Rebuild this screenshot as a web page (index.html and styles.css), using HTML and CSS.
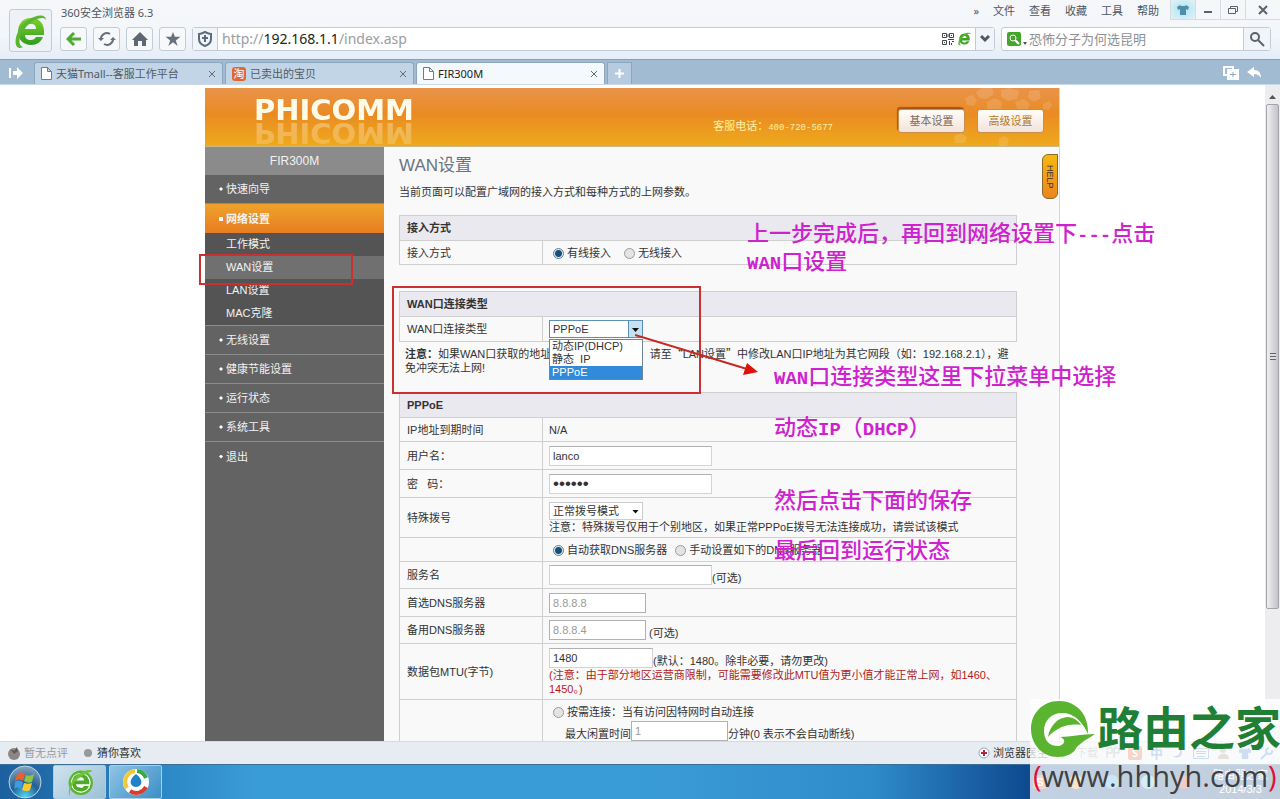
FILE: index.html
```html
<!DOCTYPE html>
<html lang="zh-CN">
<head>
  <meta charset="UTF-8" />
  <meta name="viewport" content="width=device-width, initial-scale=1.0" />
  <title>FIR300M</title>
  <link rel="stylesheet" href="styles.css">
</head>
<body>
  <header class="chrome">
    <button class="logo-btn" aria-label="360">
      <svg width="36" height="38" viewBox="0 0 36 38">
        <defs><linearGradient id="g1" x1="0" y1="0" x2="0" y2="1"><stop offset="0" stop-color="#7fd02e"/><stop offset="1" stop-color="#2f9c1e"/></linearGradient></defs>
        <path d="M18 6C9 6 5 13 5 20c0 8 6 13 13 13 6 0 10-3 12-8h-7c-1 2-3 3-5 3-4 0-6-2-6-5h19C32 12 27 6 18 6zM12 17c1-4 3-5 6-5s5 1 5 5z" fill="url(#g1)"/>
        <path d="M33 8C33 2 24 2 15 8 6 14 1 26 3 33c1 3 4 4 7 2-5-1-5-11 2-19C19 8 30 3 33 8z" fill="#5cb531"/>
      </svg>
    </button>
    <div class="chrome-main">
      <div class="title-row">
        <span class="app-title">360安全浏览器 6.3</span>
        <nav class="menu">
          <a href="#">»</a><a href="#">文件</a><a href="#">查看</a><a href="#">收藏</a><a href="#">工具</a><a href="#">帮助</a>
        </nav>
        <div class="win-btns">
          <button class="skin" aria-label="皮肤"><svg width="12" height="12" viewBox="0 0 12 12"><path d="M3 1l1 1h4l1-1 3 2-1 3-2-1v6H3V5L1 6 0 3z" fill="#4f8ea8"/></svg></button>
          <button aria-label="最小化"><svg width="10" height="10"><path d="M1 7h8" stroke="#59636e" stroke-width="2"/></svg></button>
          <button aria-label="还原"><svg width="12" height="10" fill="none" stroke="#59636e"><path d="M3.500 3V1.500h7v5H9M1.500 3.500h7v5h-7z"/></svg></button>
          <button class="close" aria-label="关闭"><svg width="10" height="10"><path d="M1 1l8 8M9 1L1 9" stroke="#59636e" stroke-width="2"/></svg></button>
        </div>
      </div>
      <div class="tool-row">
        <button class="tool" aria-label="后退"><svg width="16" height="14"><path d="M8 1L2 7l6 6M3 7h12" fill="none" stroke="#4dab31" stroke-width="3"/></svg></button>
        <button class="tool" aria-label="刷新"><svg width="18" height="16" fill="none" stroke="#66717c" stroke-width="2"><path d="M3 9a6 6 0 0 1 9-6M15 7a6 6 0 0 1-9 6"/><path d="M0 7l3 3 3-3zM12 9l3-3 3 3z" fill="#66717c" stroke="none"/></svg></button>
        <button class="tool" aria-label="主页"><svg width="16" height="14"><path d="M8 0l8 8h-2v6h-4V9H6v5H2V8H0z" fill="#5d6872"/></svg></button>
        <button class="tool" aria-label="收藏夹"><svg width="16" height="14" viewBox="0 0 16 15"><path d="M8 0l2 5h6l-5 4 2 6-5-4-5 4 2-6-5-4h6z" fill="#66717c"/></svg></button>
        <div class="address">
          <span class="shield"><svg width="16" height="16" fill="none" stroke="#5a6b7e" stroke-width="2"><path d="M8 1c2 1 4 2 6 2v5c0 4-3 6-6 7-3-1-6-3-6-7V3c2 0 4-1 6-2zM8 4v7M5 7h6"/></svg></span>
          <span class="url">http://<b>192.168.1.1</b>/index.asp</span>
          <svg width="12" height="12" fill="none" stroke="#3f454b"><path d="M.5.500h4v4h-4zM7.500.500h4v4h-4zM.5 7.500h4v4h-4zM2 2.500h1M9 2.500h1M2 9.500h1M6 1v3M6 6.500h6M7.500 8v4M10 8.500h2M9.500 10v2"/></svg>
          <svg width="13" height="14" viewBox="2 3 32 33"><path d="M18 6C9 6 5 13 5 20c0 8 6 13 13 13 6 0 10-3 12-8h-7c-1 2-3 3-5 3-4 0-6-2-6-5h19C32 12 27 6 18 6zM12 17c1-4 3-5 6-5s5 1 5 5z" fill="#3fa528"/><path d="M33 8C32 3 24 3 15 9 6 15 2 26 3 33c1 2 3 3 6 1-5-2-2-12 4-18 7-7 16-12 20-8z" fill="#5cb531"/></svg>
          <button class="drop" aria-label="展开"><svg width="10" height="8"><path d="M1 1l4 4 4-4" fill="none" stroke="#4f5962" stroke-width="3"/></svg></button>
        </div>
        <div class="search">
          <svg class="engine" width="20" height="15"><rect width="14" height="14" rx="2" fill="#43a52a"/><circle cx="6" cy="6" r="3" fill="none" stroke="#fff" stroke-width="1"/><path d="M8 8l4 4" stroke="#fff" stroke-width="2"/><path d="M16 10h4l-2 3z" fill="#555"/></svg>
          <input type="text" aria-label="搜索" placeholder="恐怖分子为何选昆明">
          <button aria-label="搜索"><svg width="16" height="16" fill="none" stroke="#59636e" stroke-width="2"><circle cx="6" cy="6" r="4"/><path d="M9 9l6 6"/></svg></button>
        </div>
      </div>
    </div>
  </header>

  <nav class="tabs">
    <button class="tab-side" aria-label="侧栏"><svg width="14" height="12"><path d="M0 1h2v10H0zM4 4h4V0l6 6-6 6V8H4z" fill="#fff"/></svg></button>
    <div class="tab"><svg width="11" height="13"><path d="M.5.500h6l4 4v8H.5zM6.500.500v4h4" fill="#fff" stroke="#6e7c8a"/></svg><span>天猫Tmall--客服工作平台</span><button aria-label="关闭"><svg width="8" height="8"><path d="M1 1l6 6M7 1L1 7" stroke="#5f6b77" stroke-width="1"/></svg></button></div>
    <div class="tab"><span class="taobao">淘</span><span>已卖出的宝贝</span><button aria-label="关闭"><svg width="8" height="8"><path d="M1 1l6 6M7 1L1 7" stroke="#5f6b77" stroke-width="1"/></svg></button></div>
    <div class="tab active"><svg width="11" height="13"><path d="M.5.500h6l4 4v8H.5zM6.500.500v4h4" fill="#fff" stroke="#6e7c8a"/></svg><span>FIR300M</span><button aria-label="关闭"><svg width="8" height="8"><path d="M1 1l6 6M7 1L1 7" stroke="#5f6b77" stroke-width="1"/></svg></button></div>
    <button class="tab-new" aria-label="新标签"><svg width="9" height="9"><path d="M4.500 0v9M0 4.500h9" stroke="#fff" stroke-width="2"/></svg></button>
    <div class="tab-tools">
      <svg width="16" height="14" fill="none" stroke="#fff" stroke-width="2"><path d="M4 9H1V1h9v2"/><path d="M5 4h10v9H5z" fill="#fff"/><path d="M10 6v5M7 8.500h6" stroke="#8fa9c0" stroke-width="1"/></svg>
      <svg width="15" height="12"><path d="M0 5l7-5v3c5 0 7 3 7 8-2-3-4-4-7-4v3z" fill="#fff"/></svg>
    </div>
  </nav>

  <div class="viewport">
    <div class="scroll-area">
      <div class="router">
        <div class="banner">
          <span class="brand">PHICOMM</span>
          <svg class="pattern" width="110" height="58" fill="#fff" fill-opacity=".13"><path d="M16 10l7-3 5 5-3 6-7-1zM27 4l6-4h10l2 6-7 5-8-1zM38 14l8-4 7 4-1 8-8 3-6-4zM52 2l9-2 9 3-2 8-9 2-7-4zM66 14l9-3 6 5-3 7-9 1zM80 3l10-1 2 8-7 4-6-4zM94 16l6-3 3 4-3 5-6-1zM5 48l7-3 6 4-2 6H6zM50 50l6-2 4 4-2 6h-8z"/></svg>
          <span class="hotline">客服电话：<span>400-720-5677</span></span>
          <button class="mode current">基本设置</button>
          <button class="mode">高级设置</button>
        </div>
        <div class="columns">
          <nav class="side">
            <div class="model">FIR300M</div>
            <a class="item" href="#">快速向导</a>
            <a class="item open" href="#">网络设置</a>
            <div class="sub">
              <a href="#">工作模式</a>
              <a href="#" class="on">WAN设置</a>
              <a href="#">LAN设置</a>
              <a href="#">MAC克隆</a>
            </div>
            <a class="item" href="#">无线设置</a>
            <a class="item" href="#">健康节能设置</a>
            <a class="item" href="#">运行状态</a>
            <a class="item" href="#">系统工具</a>
            <a class="item last" href="#">退出</a>
          </nav>
          <main class="content">
            <h1>WAN设置</h1>
            <p class="desc">当前页面可以配置广域网的接入方式和每种方式的上网参数。</p>
            <button class="help">HELP</button>

            <table class="grid access">
              <colgroup><col class="col-name"><col></colgroup>
              <tr><th colspan="2">接入方式</th></tr>
              <tr class="h24">
                <td class="name">接入方式</td>
                <td><input type="radio" name="access" id="wired" checked><label for="wired">有线接入</label><input type="radio" name="access" id="wifi" class="next"><label for="wifi">无线接入</label></td>
              </tr>
            </table>

            <table class="grid">
              <colgroup><col class="col-name"><col></colgroup>
              <tr><th colspan="2">WAN口连接类型</th></tr>
              <tr class="h25">
                <td class="name"><label for="wanType">WAN口连接类型</label></td>
                <td>
                  <div class="select focus">
                    <select id="wanType"><option>动态IP(DHCP)</option><option>静态 IP</option><option selected>PPPoE</option></select>
                    <ul class="options"><li>动态IP(DHCP)</li><li>静态&nbsp; IP</li><li class="picked">PPPoE</li></ul>
                  </div>
                </td>
              </tr>
            </table>
            <p class="note"><b>注意：</b>如果WAN口获取的地址与LAN口同一网段，请至<q>LAN设置</q>中修改LAN口IP地址为其它网段（如：192.168.2.1），避免冲突无法上网!</p>

            <table class="grid">
              <colgroup><col class="col-name"><col></colgroup>
              <tr><th colspan="2">PPPoE</th></tr>
              <tr class="h24"><td class="name">IP地址到期时间</td><td>N/A</td></tr>
              <tr class="h28"><td class="name"><label for="user">用户名：</label></td><td><input class="text" type="text" id="user" value="lanco"></td></tr>
              <tr class="h28"><td class="name"><label for="pass">密&nbsp;&nbsp; 码：</label></td><td><input class="text" type="password" id="pass" value="123456"></td></tr>
              <tr class="h40">
                <td class="name"><label for="dial">特殊拨号</label></td>
                <td>
                  <div class="select"><select id="dial"><option>正常拨号模式</option></select></div>
                  <div class="hint">注意：特殊拨号仅用于个别地区，如果正常PPPoE拨号无法连接成功，请尝试该模式</div>
                </td>
              </tr>
              <tr class="h24">
                <td class="name"></td>
                <td><input type="radio" name="dns" id="auto" checked><label for="auto">自动获取DNS服务器</label><input type="radio" name="dns" id="manual" class="near"><label for="manual">手动设置如下的DNS服务器</label></td>
              </tr>
              <tr class="h27"><td class="name"><label for="service">服务名</label></td><td><div class="line"><input class="text" type="text" id="service"><span>(可选)</span></div></td></tr>
              <tr class="h28"><td class="name"><label for="dns1">首选DNS服务器</label></td><td><div class="line"><input class="text short" type="text" id="dns1" value="8.8.8.8" disabled></div></td></tr>
              <tr class="h27"><td class="name"><label for="dns2">备用DNS服务器</label></td><td><div class="line spaced"><input class="text short" type="text" id="dns2" value="8.8.8.4" disabled><span>(可选)</span></div></td></tr>
              <tr class="h56">
                <td class="name"><label for="mtu">数据包MTU(字节)</label></td>
                <td>
                  <div class="line"><input class="text mtu" type="text" id="mtu" value="1480"><span>(默认：1480。除非必要，请勿更改)</span></div>
                  <div class="warn">(注意：由于部分地区运营商限制，可能需要修改此MTU值为更小值才能正常上网，如1460、1450。)</div>
                </td>
              </tr>
              <tr class="h90">
                <td class="name"></td>
                <td>
                  <div><input type="radio" name="conn" id="demand"><label for="demand">按需连接：当有访问因特网时自动连接</label></div>
                  <div class="line idle"><label for="idle">最大闲置时间</label><input class="text short" type="text" id="idle" value="1" disabled><span>分钟(0 表示不会自动断线)</span></div>
                </td>
              </tr>
            </table>
          </main>
        </div>

        <!-- tutorial marks laid over the page -->
        <div class="mark box-menu"></div>
        <div class="mark box-type"></div>
        <svg class="mark-arrow" width="124" height="48"><path d="M0 4l112 34" stroke="#c52a22" stroke-width="2"/><path d="M123 41l-15 3 4-12z" fill="#e01008"/></svg>
        <p class="tip tip-1">上一步完成后，再回到网络设置下<i>---</i>点击<br><i>WAN</i>口设置</p>
        <p class="tip tip-2"><i>WAN</i>口连接类型这里下拉菜单中选择</p>
        <p class="tip tip-3">动态<i>IP</i>（<i>DHCP</i>）</p>
        <p class="tip tip-4">然后点击下面的保存</p>
        <p class="tip tip-5">最后回到运行状态</p>
      </div>
    </div>
    <div class="scrollbar">
      <span class="up"></span>
      <span class="thumb"></span>
    </div>
  </div>

  <footer class="status">
    <svg width="14" height="14"><circle cx="7" cy="8" r="6" fill="#8c8784"/><path d="M3 3l4 2 3-4 1 4-4 3z" fill="#5f5a58"/></svg>
    <span class="muted">暂无点评</span>
    <span class="dot"></span>
    <span>猜你喜欢</span>
    <div class="status-right">
      <span class="doctor"><svg width="12" height="12"><circle cx="6" cy="6" r="5" fill="#fff" stroke="#9aa3b5"/><path d="M6 3v6M3 6h6" stroke="#b02c3c" stroke-width="2"/></svg>浏览器医生</span>
      <svg width="12" height="12"><path d="M4 0h4v5h4l-6 6-6-6h4z" fill="#58b030"/></svg>
      <span class="muted">下载</span>
      <svg width="14" height="12"><path d="M1 11V1h5v5H1M8 11V1h5v5H8" fill="none" stroke="#778"/></svg>
      <b class="ime">S</b><b class="zh">中</b>
      <svg width="14" height="14"><path d="M8 1c3 5 0 10-6 9 6 5 13-3 6-9z" fill="#3c7ec8"/></svg>
      <svg width="16" height="12" fill="none" stroke="#3c7ec8"><path d="M.5 1.500h15v10H.5zM3 4.500h10M3 6.500h10M4 9.500h8"/></svg>
      <svg width="13" height="14"><circle cx="6" cy="4" r="3" fill="#987"/><path d="M1 13c0-7 11-7 11 0z" fill="#987"/></svg>
      <svg width="14" height="13" viewBox="0 0 12 12"><path d="M3 1l1 1h4l1-1 3 2-1 3-2-1v6H3V5L1 6 0 3z" fill="#3c7ec8"/></svg>
      <svg width="13" height="13"><path d="M1 12l6-6M12 3a3 3 0 1 1-3-2" stroke="#3c7ec8" stroke-width="2" fill="none"/></svg>
    </div>
  </footer>

  <footer class="taskbar">
    <button class="start" aria-label="开始">
      <svg width="34" height="34" viewBox="0 0 34 34">
        <defs><radialGradient id="orb" cx=".5" cy=".95" r=".9"><stop offset="0" stop-color="#4fd6f5"/><stop offset=".5" stop-color="#1f5f95"/><stop offset="1" stop-color="#7f9fb8"/></radialGradient></defs>
        <circle cx="17" cy="17" r="16" fill="url(#orb)" stroke="#bcd6e6"/>
        <path d="M9 9c3-2 5-2 8 0l-2 7c-3-2-5-2-8 0z" fill="#e9602e"/><path d="M18 10c3 1 5 1 8-1l-2 8c-3 1-5 1-8-1z" fill="#8cc63c"/>
        <path d="M7 17c3-2 5-1 8 0l-2 7c-3-2-5-2-7 0z" fill="#3f9be0"/><path d="M16 18c3 1 5 1 8 0l-2 7c-3 2-5 1-8 0z" fill="#fbc92f"/>
      </svg>
    </button>
    <button class="task on" aria-label="360安全浏览器">
      <svg width="30" height="30" viewBox="0 0 36 38"><circle cx="19" cy="20" r="14" fill="#fff" stroke="#5cb531" stroke-width="3"/><path d="M18 9C11 9 8 15 8 20c0 7 5 11 11 11 5 0 9-3 10-7h-6c-1 2-3 3-5 2-3 0-5-1-5-4h17C30 14 26 9 18 9zM13 17c1-3 3-4 6-4s4 1 4 4z" fill="#4dab2a"/><path d="M34 5C28 1 14 8 8 18 4 25 3 33 5 37c-1-12 8-25 29-32z" fill="#6cc33a"/></svg>
    </button>
    <button class="task" aria-label="浏览器">
      <svg width="28" height="28"><circle cx="14" cy="14" r="13" fill="#fff"/><g fill="none" stroke-width="4"><path d="M15 3a11 11 0 0 1 9 7" stroke="#39a845"/><path d="M24 19a11 11 0 0 1-16 4" stroke="#d93e2c"/><path d="M5 20A11 11 0 0 1 13 3" stroke="#f3c736"/></g><path d="M14 6c5 4 6 7 5 10-2 4-8 4-10 0-1-3 0-6 5-10z" fill="#1f82c8"/></svg>
    </button>
    <div class="tray"><b class="ime">S</b><i class="t1"></i><i class="t2"></i><i class="t3"></i><i class="t4"></i><span>路由器之家<br>2014/3/3</span></div>
  </footer>

  <div class="watermark">
    <div class="wm-top">
      <svg width="66" height="58" viewBox="0 0 66 58"><path d="M58 34c1-20-12-33-29-33C12 1 1 14 1 29s11 28 27 28c8 0 14-3 17-7 3-6 11-10 20-16-14 0-24 3-35 3 8 3 3 9-2 9-9 0-14-6-14-15C14 20 22 13 32 13c12 0 20 8 26 21z" fill="#5ab42f"/><path d="M18 37c2-12 10-19 19-20 7 0 11 4 14 8-12-2-24 2-33 12z" fill="#5ab42f"/></svg>
      <span>路由之家</span>
    </div>
    <div class="wm-url"><em>(</em>www.hhhyh.com<em>)</em></div>
  </div>
</body>
</html>
```
FILE: styles.css
```css
* {
  box-sizing: border-box;
}
body {
  margin: 0;
  height: 100vh;
  display: flex;
  flex-direction: column;
  overflow: hidden;
  position: relative;
  background: #fff;
  color: #333;
  font-family: "Liberation Sans", "Noto Sans CJK SC", sans-serif;
  font-size: 11px;
  line-height: 14px;
}
button, input, select {
  font: inherit;
  color: inherit;
  margin: 0;
}
button {
  padding: 0;
  border: none;
  background: none;
  display: flex;
  align-items: center;
  justify-content: center;
}
a {
  color: inherit;
  text-decoration: none;
}
p, h1, ul {
  margin: 0;
  padding: 0;
}
svg {
  flex: none;
}

/* browser toolbar */
.chrome {
  display: flex;
  flex: none;
  gap: 8px;
  height: 59px;
  padding-left: 9px;
  background: linear-gradient(#f6f7f9, #f3f6fa 60%, #e3eef8);
  font-family: "Noto Sans", "Noto Sans CJK SC", sans-serif;
  color: #4d5660;
}
.logo-btn {
  width: 43px;
  height: 43px;
  margin-top: 9px;
  border: 1px solid #c3cbd4;
  border-radius: 3px;
  background: #eef2f6;
}
.chrome-main {
  flex: 1;
}
.title-row {
  display: flex;
  height: 27px;
}
.app-title {
  padding: 6px 1px;
}
.menu {
  display: flex;
  gap: 14px;
  margin-left: auto;
  padding: 4px 11px;
}
.win-btns {
  display: flex;
  height: 20px;
}
.win-btns button {
  width: 25px;
  border: 1px solid #d5dbe2;
  border-width: 0 0 1px 1px;
}
.win-btns .close {
  width: 35px;
}
.win-btns .skin {
  background: radial-gradient(#a8e6f4, #e6f1f6);
}
.tool-row {
  display: flex;
  gap: 6px;
  height: 24px;
  margin-right: 9px;
}
.tool {
  width: 27px;
  border: 1px solid #c3cbd4;
  border-radius: 3px;
  background: #f6f8fa;
}
.address, .search {
  display: flex;
  align-items: center;
  border: 1px solid #c3cbd4;
  border-radius: 3px;
  background: #fff;
}
.address {
  flex: 1;
  gap: 4px;
}
.shield {
  display: flex;
  align-items: center;
  justify-content: center;
  width: 25px;
  height: 22px;
  background: #f1f4f8;
  border-right: 1px solid #c3cbd4;
}
.url {
  flex: 1;
  font-size: 14px;
  color: #9a9da0;
}
.url b {
  font-weight: normal;
  color: #222;
}
.drop {
  width: 19px;
  height: 22px;
  background: #f1f4f8;
  border-left: 1px solid #c3cbd4;
}
.search {
  width: 270px;
  padding-left: 5px;
  gap: 2px;
}
.search input {
  flex: 1;
  min-width: 0;
  padding: 0;
  border: none;
  outline: none;
  background: none;
  font-size: 13px;
}
.search input::placeholder {
  color: #8e9194;
}
.search button {
  width: 27px;
  height: 22px;
  background: #f1f4f8;
  border-left: 1px solid #c3cbd4;
}

/* tabs */
.tabs {
  display: flex;
  flex: none;
  gap: 2px;
  height: 26px;
  padding-top: 2px;
  background: #a1bbd2;
  border-top: 1px solid #88a0b6;
  border-bottom: 1px solid #c9d9e8;
  font-family: "Noto Sans", "Noto Sans CJK SC", sans-serif;
  color: #505a64;
}
.tab-side {
  width: 32px;
}
.tab {
  display: flex;
  align-items: center;
  gap: 4px;
  width: 189px;
  padding: 0 6px;
  border: 1px solid #8da6bd;
  border-bottom: none;
  border-radius: 3px 3px 0 0;
  background: #c2d5e7;
}
.tab.active {
  background: #f4f9fd;
  color: #222;
}
.tab button {
  margin-left: auto;
}
.taobao {
  width: 14px;
  height: 14px;
  border-radius: 3px;
  background: #dd6a35;
  color: #fff;
  line-height: 13px;
  text-align: center;
}
.tab-new {
  width: 25px;
  border: 1px solid #8da6bd;
  border-bottom: none;
  background: #b6cbdf;
}
.tab-tools {
  display: flex;
  align-items: center;
  gap: 8px;
  margin-left: auto;
  padding-right: 18px;
}

/* page area */
.viewport {
  flex: 1;
  min-height: 0;
  display: flex;
  overflow: hidden;
}
.scroll-area {
  flex: 1;
  overflow: hidden;
  padding-top: 3px;
}
.scrollbar {
  display: flex;
  flex-direction: column;
  width: 15px;
  padding: 0 1px;
  background: #ededf0;
}
.scrollbar .up {
  width: 7px;
  height: 4px;
  margin: 10px 3px 5px;
  background: #555;
  clip-path: polygon(50% 0, 100% 100%, 0 100%);
}
.scrollbar .thumb {
  height: 77%;
  border: 1px solid #a3a3a9;
  border-radius: 2px;
  background:
    repeating-linear-gradient(#666 0 1px, #ddd 1px 3px) center / 6px 7px no-repeat,
    linear-gradient(90deg, #f0f0f2, #c2c2c8);
}
.router {
  position: relative;
  width: 855px;
  margin: 0 auto;
  border-right: 1px solid #d5d5d5;
}

.banner {
  position: relative;
  display: flex;
  align-items: center;
  height: 59px;
  padding: 8px 15px 0 49px;
  background: linear-gradient(#e8934a, #ea8b22 45%, #eeaa1c);
  border-bottom: 1px solid #c9b68a;
}
.brand {
  align-self: flex-start;
  font-family: "DejaVu Sans", sans-serif;
  font-size: 29px;
  font-weight: bold;
  line-height: 26px;
  color: #fffbe8;
  margin-top: 1px;
  -webkit-box-reflect: below -3px linear-gradient(rgba(0, 0, 0, .2), rgba(0, 0, 0, .35));
}
.pattern {
  position: absolute;
  right: 0;
  top: 0;
}
.hotline {
  margin-left: auto;
  margin-right: 65px;
  padding-top: 12px;
  color: #fff0a8;
}
.hotline span {
  font-family: "Liberation Mono", monospace;
  font-size: 9px;
}
.mode {
  position: relative;
  width: 67px;
  height: 24px;
  margin-left: 12px;
  border: 1px solid #c98d4c;
  border-radius: 3px;
  background: linear-gradient(#fffdf8, #f3e3db);
  color: #b07a2e;
}
.mode.current {
  margin-left: 0;
  color: #7d6a60;
  box-shadow: -1px -2px 1px #a8541a;
}

.columns {
  display: flex;
}
.side {
  width: 179px;
  min-height: 700px;
  background: #636363;
  color: #f2f2f2;
}
.model {
  height: 28px;
  line-height: 28px;
  background: #8b8b8b;
  font-size: 12px;
  text-align: center;
}
.item {
  display: flex;
  align-items: center;
  gap: 3px;
  height: 29px;
  padding-left: 14px;
  border-bottom: 1px solid #8c8c8c;
}
.item::before {
  content: "";
  width: 4px;
  height: 4px;
  background: #fff;
  clip-path: polygon(50% 0, 100% 50%, 50% 100%, 0 50%);
}
.item.open {
  border-bottom: none;
  background: linear-gradient(#efa22a, #e67d22);
  font-weight: bold;
}
.item.open::before {
  clip-path: none;
}
.item.last {
  border-bottom: none;
}
.sub {
  background: #545454;
  border-bottom: 1px solid #8c8c8c;
}
.sub a {
  display: block;
  height: 23px;
  line-height: 23px;
  padding-left: 21px;
}
.sub .on {
  background: #707070;
}

.content {
  position: relative;
  flex: 1;
  min-width: 0;
  padding: 9px 42px 0 15px;
  background: #f9f9f9;
}
.content h1 {
  font-size: 17px;
  font-weight: normal;
  line-height: 20px;
  color: #6a7480;
}
.desc {
  margin: 9px 0 16px;
}
.help {
  position: absolute;
  right: 1px;
  top: 7px;
  width: 16px;
  height: 45px;
  border: 1px solid #8a6a2a;
  border-radius: 6px 0 6px 6px;
  background: linear-gradient(#f6b90e, #ec8420);
  font-size: 9px;
  writing-mode: vertical-rl;
}

.grid {
  width: 100%;
  border-collapse: collapse;
  table-layout: fixed;
  border: 1px solid #cfcfcf;
}
.col-name {
  width: 143px;
}
.access {
  margin-bottom: 26px;
}
.grid th {
  height: 25px;
  padding: 0 7px;
  background: #e9e9ef;
  text-align: left;
  border-bottom: 1px solid #cfcfcf;
}
.grid td {
  padding: 0 6px;
  border: 1px solid #cfcfcf;
}
.grid .name {
  padding-left: 7px;
}
.h24 { height: 24px; }
.h25 { height: 25px; }
.h27 { height: 27px; }
.h28 { height: 28px; }
.h40 { height: 40px; }
.h56 { height: 56px; }
.h90 { height: 90px; }
.grid .h90 td {
  vertical-align: top;
  padding-top: 5px;
}
.note {
  margin: 4px 0 17px;
  padding: 0 6px;
}
.note q {
  quotes: "“" "”";
}
.note q::before, .note q::after {
  font-family: "Noto Sans CJK SC", sans-serif;
}
input[type="radio"] {
  appearance: none;
  width: 11px;
  height: 11px;
  margin: 0 3px 0 4px;
  border: 1px solid #9a9a9a;
  border-radius: 50%;
  background: #e4e4e4;
  vertical-align: -2px;
}
input[type="radio"]:checked {
  border-color: #6a8090;
  background: radial-gradient(#16507a 0 3px, #dcebf3 4px);
}
input[type="radio"].next {
  margin-left: 13px;
}
input[type="radio"].near {
  margin-left: 8px;
}
.text {
  width: 163px;
  height: 20px;
  padding: 0 3px;
  border: 1px solid #d4d4d4;
  border-top-color: #b0b0b0;
  background: #fff;
  vertical-align: middle;
}
.text[type="password"] {
  font-size: 17px;
}
.text.short {
  width: 97px;
  border-color: #b0b0b0;
}
.text:disabled {
  color: #999;
}
.text.mtu {
  width: 104px;
}
.line {
  display: flex;
  align-items: flex-end;
  white-space: nowrap;
}
.spaced {
  gap: 3px;
}
.warn {
  color: #b01c1c;
}
.idle {
  margin-top: 2px;
  padding-left: 16px;
}
.select {
  position: relative;
  width: 94px;
  height: 18px;
  border: 1px solid #cdcdcd;
  background: #fff;
}
.select select {
  appearance: none;
  display: block;
  width: 100%;
  height: 16px;
  padding: 0 3px;
  border: none;
  background: none;
  line-height: 16px;
}
.select::after {
  content: "";
  position: absolute;
  right: 3px;
  top: 7px;
  width: 7px;
  height: 4px;
  background: #111;
  clip-path: polygon(0 0, 100% 0, 50% 100%);
}
.select.focus {
  border-color: #5b8fb5;
}
.focus select {
  background: linear-gradient(90deg, transparent 78px, #5b8fb5 78px 79px, #c5e2f2 79px);
}
.options {
  position: absolute;
  z-index: 2;
  left: -1px;
  top: 18px;
  width: 94px;
  border: 1px solid #6f8598;
  background: #fff;
  list-style: none;
}
.options li {
  height: 13px;
  line-height: 13px;
  padding-left: 2px;
}
.options .picked {
  background: #318ada;
  color: #fff;
}

/* tutorial marks */
.mark {
  position: absolute;
  z-index: 3;
  border: 2px solid #c9302f;
  pointer-events: none;
}
.box-menu {
  left: -6px;
  top: 166px;
  width: 154px;
  height: 31px;
}
.box-type {
  left: 187px;
  top: 198px;
  width: 309px;
  height: 108px;
}
.mark-arrow {
  position: absolute;
  z-index: 3;
  left: 430px;
  top: 243px;
  pointer-events: none;
}
.tip {
  position: absolute;
  z-index: 3;
  white-space: nowrap;
  font-size: 22px;
  font-weight: 500;
  line-height: 28px;
  color: #cf22cf;
  pointer-events: none;
}
.tip i {
  font-family: "Liberation Mono", monospace;
  font-size: 19px;
  font-style: normal;
  font-weight: bold;
  line-height: 20px;
}
.tip-1 { left: 542px; top: 132px; }
.tip-2 { left: 569px; top: 275px; }
.tip-3 { left: 569px; top: 326px; }
.tip-4 { left: 569px; top: 399px; }
.tip-5 { left: 569px; top: 449px; }

/* status bar */
.status {
  display: flex;
  flex: none;
  align-items: center;
  gap: 3px;
  height: 23px;
  padding: 0 7px;
  background: #e7ecf3;
  border-top: 1px solid #d3dae3;
  font-family: "Noto Sans", "Noto Sans CJK SC", sans-serif;
}
.muted {
  color: #999;
}
.dot {
  width: 8px;
  height: 8px;
  margin: 0 2px 0 13px;
  border-radius: 50%;
  background: #999;
}
.status-right {
  display: flex;
  align-items: center;
  gap: 8px;
  margin-left: auto;
}
.doctor {
  display: flex;
  align-items: center;
  gap: 3px;
}
.ime {
  width: 14px;
  line-height: 14px;
  border-radius: 2px;
  background: #e05a20;
  color: #fff;
  text-align: center;
}
.zh {
  color: #3c7ec8;
  font-size: 13px;
}

/* taskbar */
.taskbar {
  display: flex;
  flex: none;
  gap: 3px;
  height: 35px;
  background: linear-gradient(90deg, #1c5f9e, #2b86c4 12%, #3a9cd6 20%, #3a9cd6 50%, #2f8ccb 68%, #0f4b90 80%, #0d3f7c);
  border-top: 1px solid #3a6f98;
}
.start {
  width: 50px;
}
.task {
  width: 53px;
  border: 1px solid #a9cfe6;
  border-radius: 2px;
  background: linear-gradient(135deg, #8ec4e4, #3c8fc6);
}
.task.on {
  background: linear-gradient(135deg, #cfe2ee, #9dc0d6);
}
.tray {
  display: flex;
  align-items: center;
  gap: 22px;
  margin-left: auto;
  padding-right: 12px;
  color: #fff;
  text-align: center;
}
.tray i {
  width: 14px;
  height: 14px;
  border-radius: 50%;
  background: #e89030;
}
.tray .t2 { background: #30a0e0; }
.tray .t3 { background: #50b8e8; }
.tray .t4 { background: #c03840; }

/* site stamp in the corner */
.watermark {
  position: absolute;
  z-index: 5;
  right: 0;
  bottom: 0;
  width: 250px;
  height: 100px;
  background: rgba(255, 255, 255, .75);
  pointer-events: none;
}
.wm-top {
  display: flex;
  align-items: center;
  gap: 1px;
  height: 60px;
}
.wm-top span {
  font-size: 46px;
  font-weight: bold;
  line-height: 60px;
  color: #1f7f35;
  white-space: nowrap;
}
.wm-url {
  font-family: "Open Sans", sans-serif;
  font-size: 29px;
  line-height: 34px;
  padding-left: 3px;
  color: #404040;
  white-space: nowrap;
}
.wm-url em {
  color: #e0103a;
  font-style: normal;
}
```
